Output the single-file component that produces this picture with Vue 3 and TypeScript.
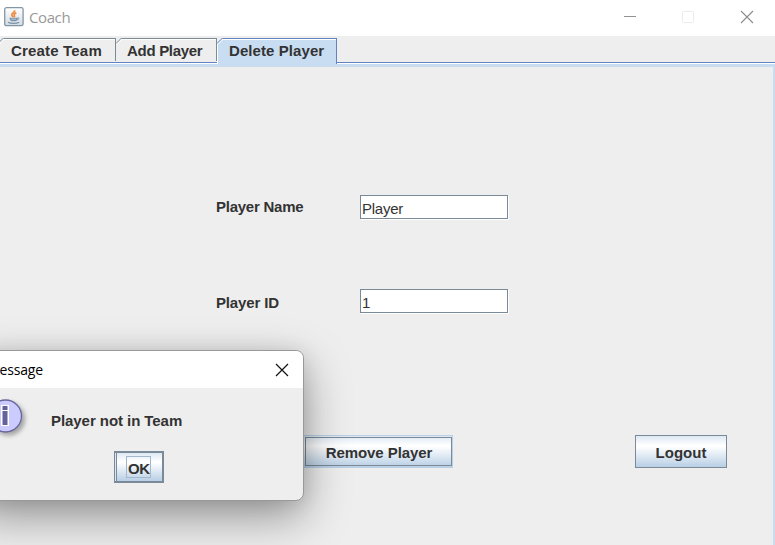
<script setup lang="ts">
import { ref } from 'vue'

interface Tab {
  id: string
  label: string
}

const tabs: Tab[] = [
  { id: 'create', label: 'Create Team' },
  { id: 'add', label: 'Add Player' },
  { id: 'delete', label: 'Delete Player' },
]
const active = ref('delete')
const playerName = ref('Player')
const playerId = ref('1')
const dialogOpen = ref(true)
</script>

<template>
  <div class="window">
    <header class="titlebar">
      <svg class="java" width="20" height="20" viewBox="0 0 20 20">
        <defs>
          <linearGradient id="jbg" x1="0" y1="0" x2="0" y2="1">
            <stop offset="0" stop-color="#ffffff" />
            <stop offset="1" stop-color="#d3dbe2" />
          </linearGradient>
        </defs>
        <rect x="0.7" y="0.7" width="18.4" height="18" rx="1.8" fill="url(#jbg)" stroke="#8396a6" stroke-width="1.3" />
        <path d="M10.6 3.2C11.4 5.2 7.6 6 7.8 8c.1 1 1 1.500 1.300 2.200M12.300 5.800C10.600 6.700 9.800 7.300 10.100 8.300c.2.800.7 1 .1 1.900" fill="none" stroke="#f08b3e" stroke-width="1.7" />
        <path d="M5.500 10.800h8c0 2-.7 3.200-2 3.500H7.700c-1.400-.3-2-1.500-2.200-3.500z" fill="#7792a9" />
        <path d="M13.300 11c2.300-.8 2.300 1.700-.7 2" fill="none" stroke="#7792a9" stroke-width="1" />
        <path d="M7 12.200h5" stroke="#d7e1e9" stroke-width=".7" />
        <path d="M4 15.200c2.500 1.500 8.500 1.500 11.200 0" fill="none" stroke="#7792a9" stroke-width="1.300" />
      </svg>
      <span class="title">Coach</span>
      <svg class="controls" width="132" height="14" viewBox="0 0 132 14">
        <path d="M0 6.500h12" stroke="#929292" />
        <rect x="58.500" y="1.500" width="11" height="11" rx="1" fill="none" stroke="#ebebeb" />
        <path d="M117 1l12 12M129 1l-12 12" stroke="#8c8c8c" stroke-width="1.1" />
      </svg>
    </header>

    <nav class="tabs">
      <button
        v-for="tab in tabs"
        :key="tab.id"
        class="tab"
        :class="[tab.id, { active: tab.id === active }]"
        @click="active = tab.id"
      >
        <svg class="corner" width="6" height="6" viewBox="0 0 6 6">
          <path class="cut" d="M0 0h6L0 6z" />
          <path class="shine" d="M1.200 6.200L6.200 1.200" />
          <path class="edge" d="M0 5.500L5.500 0" />
        </svg>
        <span>{{ tab.label }}</span>
      </button>
    </nav>

    <main class="panel">
      <form class="form" @submit.prevent>
        <label class="label" for="name">Player Name</label>
        <input id="name" v-model="playerName" class="field" type="text" />
        <label class="label" for="pid">Player ID</label>
        <input id="pid" v-model="playerId" class="field" type="text" />
      </form>
      <div class="actions">
        <button class="btn remove"><span>Remove Player</span></button>
        <button class="btn logout"><span>Logout</span></button>
      </div>
    </main>

    <section v-if="dialogOpen" class="dialog" role="dialog">
      <header class="dialog-title">
        <span class="dialog-name">Message</span>
        <svg class="close" width="14" height="14" viewBox="0 0 14 14" @click="dialogOpen = false">
          <path d="M1 1l12 12M13 1L1 13" stroke="#111" stroke-width="1.200" />
        </svg>
      </header>
      <div class="dialog-body">
        <svg class="info" width="40" height="40" viewBox="0 0 40 40">
          <circle cx="18.500" cy="18" r="16" fill="#cbcbff" stroke="#66669a" stroke-width="1.300" />
          <path d="M14 7h8v21h-8z" fill="#fff" />
          <path d="M15.500 8h5v4h-5zM15.500 13h5v14h-5z" fill="#63639a" />
        </svg>
        <p class="message">Player not in Team</p>
      </div>
      <button class="ok" @click="dialogOpen = false"><span>OK</span></button>
    </section>
  </div>
</template>

<style>
html,
body {
  margin: 0;
  overflow: hidden;
}
</style>

<style scoped>
.window {
  position: relative;
  display: flex;
  flex-direction: column;
  width: 775px;
  height: 545px;
  overflow: hidden;
  background: #eee;
  color: #333;
  font: bold 15px/18px 'Liberation Sans', Arial, sans-serif;
}
* {
  box-sizing: border-box;
}
button {
  margin: 0;
  padding: 0;
  border: 0;
  color: inherit;
  font: inherit;
}
.titlebar {
  display: flex;
  align-items: center;
  flex: none;
  height: 36px;
  padding: 0 19px 2px 4px;
  background: #fff;
}
.java {
  flex: none;
}
.title {
  margin: 0 auto 0 5px;
  color: #999;
  font: 15px/20px 'Open Sans', 'Noto Sans', sans-serif;
  letter-spacing: -0.4px;
}
.controls {
  flex: none;
}
.tabs {
  display: flex;
  flex: none;
  height: 28px;
  padding-top: 2px;
  background: linear-gradient(#eee 26px, #6382bf 26px, #6382bf 27px, #fff 27px);
}
.tab {
  position: relative;
  display: flex;
  align-items: flex-start;
  height: 23px;
  border-top: 1px solid #7a8a99;
  border-right: 1px solid #7a8a99;
  background: #eee;
  box-shadow: inset 0 1px #fff;
  white-space: nowrap;
}
.tab span {
  padding: 3px 0 0 11px;
}
.tab.create {
  width: 116px;
  letter-spacing: 0.18px;
}
.tab.add {
  width: 101px;
  letter-spacing: -0.3px;
}
.tab.delete {
  width: 120px;
  letter-spacing: 0.08px;
}
.tab.active {
  height: 26px;
  border-color: #6382bf;
  background: #c8ddf2;
  box-shadow: inset 1px 1px #fff, 0 1px #c8ddf2;
}
.tab.active span {
  padding-left: 12px;
}
.corner {
  position: absolute;
  top: -1px;
  left: 0;
}
.create .corner {
  left: -2px;
}
.cut {
  fill: #eee;
}
.shine {
  fill: none;
  stroke: #fff;
}
.edge {
  fill: none;
  stroke: #7a8a99;
}
.active .edge {
  stroke: #6382bf;
}
.panel {
  flex: 1;
  padding: 128px 0 0;
  border-top: 3px solid #c8ddf2;
  border-right: 2px solid #c8ddf2;
}
.form {
  display: grid;
  grid-template-columns: 144px 149px;
  grid-auto-rows: 25px;
  row-gap: 69px;
  margin-left: 216px;
}
.label {
  padding-top: 3px;
  letter-spacing: -0.25px;
}
.label:nth-of-type(2) {
  padding-top: 5px;
  letter-spacing: -0.15px;
}
.field {
  width: 148px;
  height: 24px;
  margin: 0;
  padding: 3px 0 0 1px;
  border: 1px solid #7a8a99;
  border-radius: 0;
  outline: 0;
  background: #fff;
  box-shadow: 1px 1px #fff;
  color: #333;
  font: 15px/18px 'Liberation Sans', Arial, sans-serif;
  letter-spacing: -0.25px;
}
.actions {
  display: flex;
  justify-content: space-between;
  margin: 121px 46px 0 303px;
}
.btn {
  position: relative;
  height: 33px;
  border: 1px solid #7a8a99;
  background: linear-gradient(#dde8f3 0, #fff 30%, #fff 34%, #b8cfe5 100%);
}
.btn span {
  position: relative;
  top: 1px;
}
.remove {
  width: 150px;
  border-color: #b8cfe5;
  letter-spacing: -0.08px;
}
.remove span {
  left: 1px;
}
.remove::before {
  content: '';
  position: absolute;
  inset: 1px 0 1px 1px;
  border: 1px solid #7a8a99;
}
.logout {
  width: 92px;
}
.dialog {
  position: absolute;
  top: 350px;
  left: -26px;
  width: 330px;
  height: 151px;
  border: 1px solid #999;
  border-radius: 8px;
  background: #eee;
  box-shadow: 0 16px 46px rgba(0, 0, 0, 0.38), 0 2px 20px rgba(0, 0, 0, 0.1);
}
.dialog-title {
  display: flex;
  align-items: center;
  justify-content: space-between;
  height: 37px;
  padding: 0 14px 0 12px;
  border-radius: 7px 7px 0 0;
  background: #fff;
  color: #000;
  font: 14px/20px 'Open Sans', 'Noto Sans', sans-serif;
}
.dialog-name {
  letter-spacing: -0.15px;
}
.dialog-body {
  display: flex;
  height: 63px;
  padding: 10px 0 0 12px;
}
.info {
  flex: none;
  filter: drop-shadow(3px 3px 2px rgba(0, 0, 0, 0.3));
}
.message {
  margin: 14px 0 0 24px;
  letter-spacing: -0.06px;
  white-space: nowrap;
}
.ok {
  display: flex;
  align-items: center;
  justify-content: center;
  width: 50px;
  height: 32px;
  margin-left: 139px;
  border: 2px solid #7a8a99;
  border-left-width: 1px;
  background: linear-gradient(90deg, #dce8f2 1px, #7a8a99 1px, #7a8a99 2px, transparent 2px),
    linear-gradient(#dde8f3 0, #fff 30%, #fff 34%, #b8cfe5 100%);
}
.ok span {
  width: 25px;
  height: 22px;
  padding: 3px 0 0 1px;
  border: 1px solid #a3b8cc;
  letter-spacing: -0.4px;
  text-align: left;
}
</style>
